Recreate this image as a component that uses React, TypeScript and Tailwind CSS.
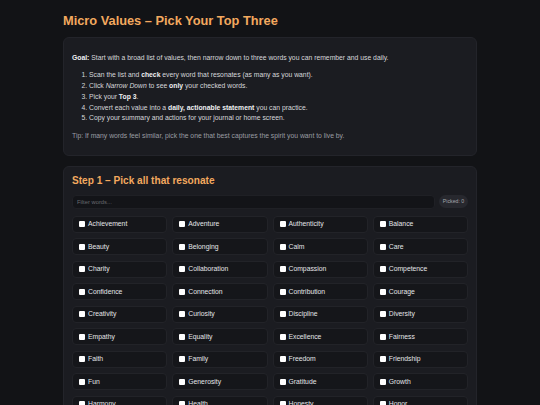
import { useState } from "react"

const WORDS = [
  "Achievement", "Adventure", "Authenticity", "Balance",
  "Beauty", "Belonging", "Calm", "Care",
  "Charity", "Collaboration", "Compassion", "Competence",
  "Confidence", "Connection", "Contribution", "Courage",
  "Creativity", "Curiosity", "Discipline", "Diversity",
  "Empathy", "Equality", "Excellence", "Fairness",
  "Faith", "Family", "Freedom", "Friendship",
  "Fun", "Generosity", "Gratitude", "Growth",
  "Harmony", "Health", "Honesty", "Honor",
  "Hope", "Humility", "Humor", "Independence",
]

export default function App() {
  const [picked, setPicked] = useState<string[]>([])
  const [filter, setFilter] = useState("")

  const toggle = (w: string) =>
    setPicked((p) => (p.includes(w) ? p.filter((x) => x !== w) : [...p, w]))

  const shown = WORDS.filter((w) => w.toLowerCase().includes(filter.toLowerCase()))

  return (
    <div
      className="min-h-screen bg-[#121316] text-[#e4e5e8]"
      style={{ fontFamily: '"Liberation Sans", Arial, sans-serif' }}
    >
      <div className="mx-auto w-[414px] pt-[12.5px] pb-6">
        <h1 className="text-[12.8px] leading-[16px] font-bold text-[#f3a95f] mb-[8.5px]">
          Micro Values – Pick Your Top Three
        </h1>

        {/* Intro */}
        <div className="bg-[#1b1c21] border border-[#23242a] rounded-[6px] px-[8px] pt-[14.5px] pb-[13px] text-[6.8px] leading-[10.75px] text-[#d6d7db]">
          <p>
            <strong className="text-[#eeeff1]">Goal:</strong> Start with a broad list of values, then narrow
            down to three words you can remember and use daily.
          </p>
          <ol className="list-decimal pl-[17px] mt-[7px]">
            <li>
              Scan the list and <strong className="text-[#eeeff1]">check</strong> every word that resonates
              (as many as you want).
            </li>
            <li>
              Click <em>Narrow Down</em> to see <strong className="text-[#eeeff1]">only</strong> your checked
              words.
            </li>
            <li>
              Pick your <strong className="text-[#eeeff1]">Top 3</strong>.
            </li>
            <li>
              Convert each value into a{" "}
              <strong className="text-[#eeeff1]">daily, actionable statement</strong> you can practice.
            </li>
            <li>Copy your summary and actions for your journal or home screen.</li>
          </ol>
          <p className="mt-[7px] text-[#9a9ca3]">
            Tip: If many words feel similar, pick the one that best captures the spirit you want to live by.
          </p>
        </div>

        {/* Step 1 */}
        <div className="mt-[10px] bg-[#1b1c21] border border-[#23242a] rounded-[6px] px-[8px] pt-[7px] pb-[10px]">
          <h2 className="text-[10.1px] leading-[13px] font-bold text-[#f3a95f] mb-[8px]">
            Step 1 – Pick all that resonate
          </h2>
          <div className="flex items-center gap-[4px] mb-[7px]">
            <input
              value={filter}
              onChange={(e) => setFilter(e.target.value)}
              placeholder="Filter words..."
              className="flex-1 h-[14px] bg-[#131418] border border-[#1f2025] rounded-[4px] px-[4px] text-[5.8px] text-[#d0d1d5] placeholder-[#686a70] outline-none"
            />
            <span className="h-[13px] w-[29px] flex items-center justify-center rounded-full bg-[#27282e] text-[5.2px] text-[#a3a5ab]">
              Picked: {picked.length}
            </span>
          </div>
          <div className="grid grid-cols-4 gap-x-[5px] gap-y-[5.5px]">
            {shown.map((w) => (
              <label
                key={w}
                className="h-[17px] flex items-center gap-[3px] pl-[6px] bg-[#15161a] border border-[#222328] rounded-[4px] text-[6.8px] cursor-pointer"
              >
                <input
                  type="checkbox"
                  checked={picked.includes(w)}
                  onChange={() => toggle(w)}
                  className="appearance-none w-[6px] h-[6px] bg-white rounded-[1px] checked:bg-[#f3a95f]"
                />
                <span>{w}</span>
              </label>
            ))}
          </div>
        </div>
      </div>
    </div>
  )
}
